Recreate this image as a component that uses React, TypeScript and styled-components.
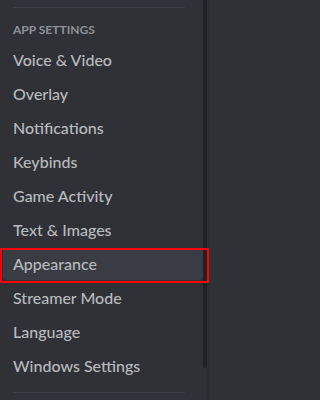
import React from 'react';
import styled, { createGlobalStyle } from 'styled-components';

const GlobalStyle = createGlobalStyle`
  html, body {
    margin: 0;
    padding: 0;
    background: #2f3136;
  }
`;

const settingsItems = [
  'Voice & Video',
  'Overlay',
  'Notifications',
  'Keybinds',
  'Game Activity',
  'Text & Images',
  'Appearance',
  'Streamer Mode',
  'Language',
  'Windows Settings',
];

const Sidebar = styled.div`
  display: flex;
  width: 211px;
  height: 400px;
  overflow: hidden;
  background: #2f3136;
  font-family: Lato, 'Open Sans', sans-serif;
`;

const Nav = styled.nav`
  flex: 1;
  display: flex;
  flex-direction: column;
  padding-top: 7px;
`;

const Divider = styled.div`
  height: 1px;
  margin: 0 18px 8px 13px;
  background: #3b3e44;

  & ~ & {
    margin-top: 8px;
  }
`;

const Header = styled.div`
  padding: 6px 10px 6px 13px;
  font-size: 12px;
  line-height: 16px;
  font-weight: 700;
  text-transform: uppercase;
  color: #8e9297;
`;

const Item = styled.div<{ $selected?: boolean }>`
  position: relative;
  margin: 0 0 2px 3px;
  padding: 6px 10px;
  font-size: 16px;
  line-height: 20px;
  font-weight: 500;
  color: #b9bbbe;
  border-radius: 4px;
  background: ${({ $selected }) => ($selected ? '#393c42' : 'transparent')};

  ${({ $selected }) => $selected && `
    &::after {
      content: '';
      position: absolute;
      z-index: 1;
      top: 0;
      bottom: -3px;
      left: -3px;
      right: -6px;
      border: 2px solid #ff0000;
    }
  `}
`;

const ScrollColumn = styled.div`
  width: 8px;
  display: flex;
`;

const Thumb = styled.div`
  width: 4px;
  height: 368px;
  background: #202225;
  border-radius: 0 0 2px 2px;
`;

const Track = styled.div`
  width: 2px;
  background: #2a2c30;
`;

const App: React.FC = () => (
  <>
    <GlobalStyle />
    <Sidebar>
      <Nav>
        <Divider />
        <Header>App Settings</Header>
        { settingsItems.map((label) => (
          <Item key={label} $selected={label === 'Appearance'}>
            { label }
          </Item>
        ))}
        <Divider />
      </Nav>
      <ScrollColumn>
        <Thumb />
        <Track />
      </ScrollColumn>
    </Sidebar>
  </>
);

export default App;
